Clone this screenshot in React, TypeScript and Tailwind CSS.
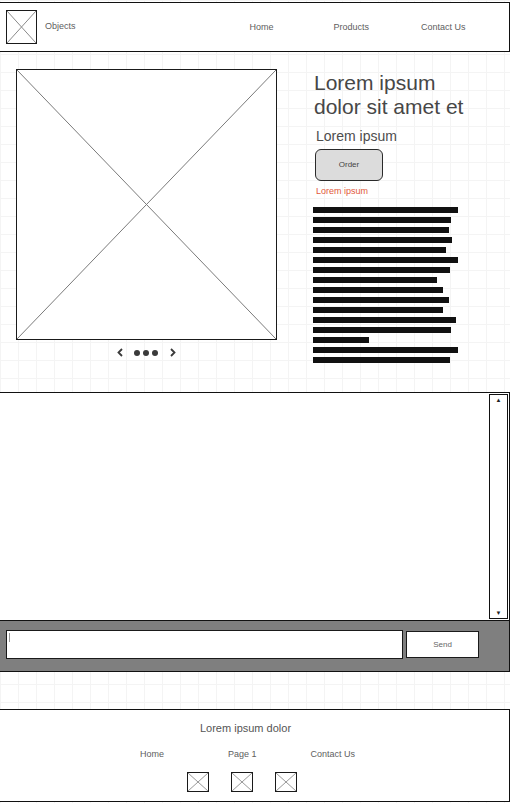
const bars = [145, 138, 136, 139, 133, 145, 137, 124, 130, 136, 130, 143, 138, 56, 145, 137]

function CrossBox({ className, lineColor = '#8a8a8a' }: { className: string; lineColor?: string }) {
  return (
    <div className={`border border-[#1a1a1a] bg-white ${className}`}>
      <svg className="h-full w-full" viewBox="0 0 100 100" preserveAspectRatio="none">
        <line x1="0" y1="0" x2="100" y2="100" stroke={lineColor} strokeWidth="1" vectorEffect="non-scaling-stroke" />
        <line x1="100" y1="0" x2="0" y2="100" stroke={lineColor} strokeWidth="1" vectorEffect="non-scaling-stroke" />
      </svg>
    </div>
  )
}

function Chevron({ dir }: { dir: 'left' | 'right' }) {
  return (
    <svg width="6" height="9" viewBox="0 0 6 9">
      <path
        d={dir === 'left' ? 'M5 1 L1.5 4.5 L5 8' : 'M1 1 L4.5 4.5 L1 8'}
        fill="none"
        stroke="#3a3a3a"
        strokeWidth="1.8"
      />
    </svg>
  )
}

export default function App() {
  return (
    <div className="relative h-[803px] w-[510px] overflow-hidden bg-white bg-[linear-gradient(to_right,#f4f4f4_1px,transparent_1px),linear-gradient(to_bottom,#f4f4f4_1px,transparent_1px)] bg-[size:18px_18px] font-['Liberation_Sans',Arial,sans-serif]">
      {/* header */}
      <header className="ml-[-1px] mt-[2px] flex h-[50px] w-[511px] items-center border border-[#111] bg-white">
        <CrossBox className="ml-[6px] h-[34px] w-[31px]" />
        <span className="ml-[8px] text-[9px] text-[#5e5e5e]">Objects</span>
        <nav className="ml-[174px] flex items-center pt-[1px] text-[9px] text-[#5e5e5e]">
          <span>Home</span>
          <span className="ml-[60px]">Products</span>
          <span className="ml-[52px]">Contact Us</span>
        </nav>
      </header>

      {/* product */}
      <section className="mt-[17px] flex h-[323px]">
        <div className="ml-[16px] flex flex-col">
          <CrossBox className="h-[271px] w-[261px]" lineColor="#7a7a7a" />
          <div className="mt-[8px] flex items-center justify-center">
            <Chevron dir="left" />
            <div className="ml-[11px] flex gap-[3px]">
              <span className="h-[6px] w-[6px] rounded-full bg-[#3a3a3a]" />
              <span className="h-[6px] w-[6px] rounded-full bg-[#3a3a3a]" />
              <span className="h-[6px] w-[6px] rounded-full bg-[#3a3a3a]" />
            </div>
            <div className="ml-[12px]">
              <Chevron dir="right" />
            </div>
          </div>
        </div>

        <div className="ml-[37px] flex flex-col">
          <h1 className="mt-[2px] text-[21px] leading-[24px] text-[#474747]">
            Lorem ipsum
            <br />
            dolor sit amet et
          </h1>
          <p className="ml-[2px] mt-[9px] text-[14px] leading-[16px] text-[#4d4d4d]">Lorem ipsum</p>
          <button className="ml-[1px] mt-[5px] flex h-[32px] w-[68px] items-center justify-center rounded-[6px] border border-[#2a2a2a] bg-[#dcdcdc] text-[8px] text-[#444]">
            Order
          </button>
          <p className="ml-[2px] mt-[5px] text-[9px] leading-[11px] text-[#e2583a]">Lorem ipsum</p>
          <div className="ml-[-1px] mt-[10px] flex flex-col gap-[4px]">
            {bars.map((w, i) => (
              <div key={i} className="h-[6px] bg-[#111]" style={{ width: w }} />
            ))}
          </div>
        </div>
      </section>

      {/* chat */}
      <section className="ml-[-1px] flex h-[280px] w-[511px] flex-col border border-[#111] bg-white">
        <div className="flex h-[227px] justify-end pb-[1px] pr-[1px] pt-[1px]">
          <div className="flex w-[19px] flex-col items-center justify-between border border-[#111] py-[2px] text-[6px] leading-[6px] text-[#222]">
            <span>▲</span>
            <span>▼</span>
          </div>
        </div>
        <div className="flex h-[51px] border-t border-[#111] bg-[#7f7f7f] pl-[6px] pt-[9px]">
          <div className="h-[29px] w-[397px] border border-[#1a1a1a] bg-white pl-[2px] pt-[2px]">
            <div className="h-[9px] w-[1px] bg-[#999]" />
          </div>
          <button className="ml-[3px] mt-[1px] flex h-[27px] w-[73px] items-center justify-center border border-[#1a1a1a] bg-white text-[8px] text-[#666]">
            Send
          </button>
        </div>
      </section>

      {/* footer */}
      <footer className="ml-[-1px] mt-[37px] flex h-[93px] w-[511px] flex-col border border-[#111] bg-white pt-[12px]">
        <p className="pr-[18px] text-center text-[11px] leading-[13px] text-[#555]">Lorem ipsum dolor</p>
        <div className="mt-[14px] flex pl-[140px] text-[9px] leading-[11px] text-[#5e5e5e]">
          <span>Home</span>
          <span className="ml-[64px]">Page 1</span>
          <span className="ml-[54px]">Contact Us</span>
        </div>
        <div className="mt-[12px] flex gap-[22px] pl-[187px]">
          <CrossBox className="h-[20px] w-[22px]" lineColor="#999" />
          <CrossBox className="h-[20px] w-[22px]" lineColor="#999" />
          <CrossBox className="h-[20px] w-[22px]" lineColor="#999" />
        </div>
      </footer>
    </div>
  )
}
